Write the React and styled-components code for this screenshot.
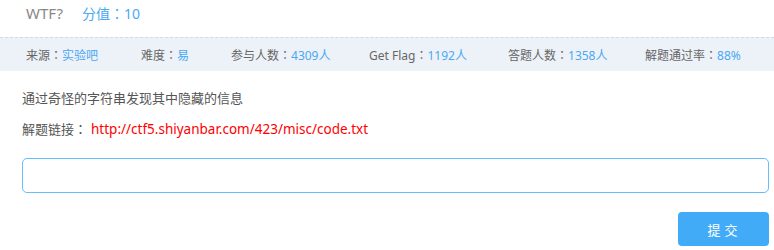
import React from 'react';
import styled, { createGlobalStyle } from 'styled-components';

const GlobalStyle = createGlobalStyle`
	html, body {
		margin: 0;
		padding: 0;
		background: #fff;
		font-family: "Noto Sans", "Noto Sans CJK SC", sans-serif;
	}
`;

const Page = styled.div`
	width: 774px;
	height: 250px;
	overflow: hidden;
`;

const Header = styled.div`
	display: flex;
	align-items: baseline;
	height: 37px;
	padding: 3px 0 0 26px;
	box-sizing: border-box;
`;

const Title = styled.span`
	font-size: 15px;
	color: #888;
	margin-right: 19px;
`;

const Score = styled.span`
	font-size: 14px;
	color: #4aa8f4;
`;

// centred full-width colon, as the Traditional Chinese face draws it
const Colon = styled.span`
	font-family: "Noto Sans CJK TC", sans-serif;
`;

const InfoBar = styled.ul`
	display: flex;
	align-items: center;
	height: 33px;
	margin: 0;
	padding: 0 0 0 26px;
	list-style: none;
	background: #edf2f8;
	border-top: 1px dashed #d6d9dd;
`;

const InfoItem = styled.li`
	flex: 0 0 ${props => (props.width ? `${props.width}px` : 'auto')};
	font-size: 12px;
	color: #666;
	white-space: nowrap;
`;

const Value = styled.span`
	color: #4aa8f4;
`;

const Body = styled.div`
	padding: 17px 5px 0 22px;
`;

const Line = styled.p`
	margin: 0 0 ${props => props.gap || 0}px;
	line-height: 20px;
	font-size: 13px;
	color: #555;
`;

const Link = styled.a`
	margin-left: 4px;
	color: #f00;
	text-decoration: none;
	font-size: 13.5px;
`;

const Input = styled.input`
	display: block;
	width: 100%;
	height: 35px;
	box-sizing: border-box;
	margin: 19px 0 0;
	border: 1px solid #68bdfb;
	border-radius: 5px;
	outline: none;
`;

const Actions = styled.div`
	display: flex;
	justify-content: flex-end;
	margin-top: 19px;
`;

const Button = styled.button`
	width: 91px;
	height: 34px;
	border: none;
	border-radius: 4px;
	background: #42abf8;
	color: #fff;
	font-family: inherit;
	font-size: 13px;
	letter-spacing: 4px;
	padding-left: 8px;
`;

const info = [
	{ label: '来源', value: '实验吧', width: 115 },
	{ label: '难度', value: '易', width: 90 },
	{ label: '参与人数', value: '4309人', width: 138 },
	{ label: 'Get Flag', value: '1192人', width: 139 },
	{ label: '答题人数', value: '1358人', width: 137 },
	{ label: '解题通过率', value: '88%' },
];

const App = () => (
	<Page>
		<GlobalStyle />
		<Header>
			<Title>WTF?</Title>
			<Score>
				分值<Colon>：</Colon>10
			</Score>
		</Header>
		<InfoBar>
			{info.map((item, index) => (
				<InfoItem key={index} width={item.width}>
					{item.label}
					<Colon>：</Colon>
					<Value>{item.value}</Value>
				</InfoItem>
			))}
		</InfoBar>
		<Body>
			<Line gap={11}>通过奇怪的字符串发现其中隐藏的信息</Line>
			<Line>
				解题链接<Colon>：</Colon>
				<Link href="#">http://ctf5.shiyanbar.com/423/misc/code.txt</Link>
			</Line>
			<Input />
			<Actions>
				<Button>提交</Button>
			</Actions>
		</Body>
	</Page>
);

export default App;
